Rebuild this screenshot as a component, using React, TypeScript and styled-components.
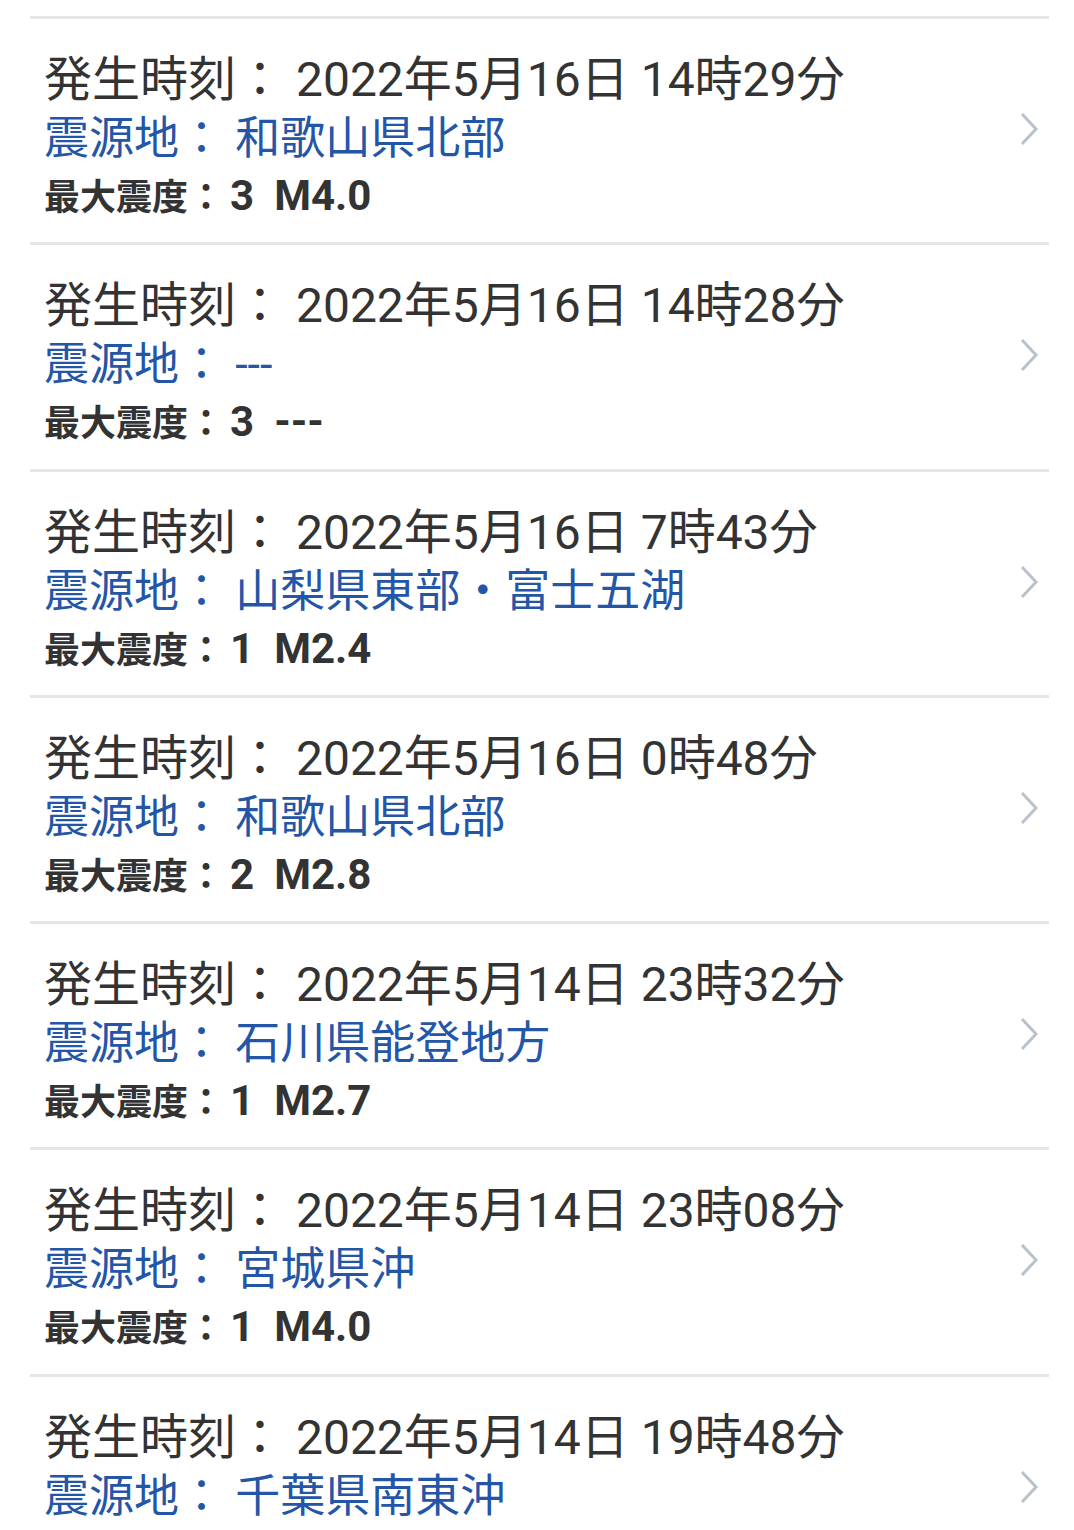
import React from "react";
import styled, { createGlobalStyle } from "styled-components";

const Global = createGlobalStyle`
  html, body { margin: 0; padding: 0; background: #ffffff; }
  body { font-family: Roboto, "Noto Sans CJK JP", sans-serif; }
`;

const List = styled.div`
  padding-top: 16px;
  background: #ffffff;
`;

const Item = styled.div`
  display: flex;
  align-items: center;
  margin: 0 25px 0 30px;
  border-top: 3px solid #e6e6e6;
  padding: 31px 10px 22.3px 14px;
`;

const Body = styled.div`
  flex: 1;
  display: flex;
  flex-direction: column;
`;

const TimeLine = styled.div`
  font-size: 48px;
  line-height: 60px;
  height: 60px;
  color: #333333;
  white-space: nowrap;
`;

const PlaceLine = styled.div`
  font-size: 45px;
  line-height: 58px;
  height: 58px;
  color: #2456a8;
  white-space: nowrap;
`;

const InfoLine = styled.div`
  font-size: 36px;
  line-height: 60px;
  height: 52px;
  font-weight: 700;
  color: #333333;
  white-space: nowrap;
`;

const Num = styled.span<{ $gap: number }>`
  font-size: 42px;
  line-height: 40px;
  margin-left: ${(p) => p.$gap}px;
`;

const Chevron = styled.svg`
  flex: none;
  width: 20px;
  height: 32px;
  margin-bottom: 12px;
`;

type Quake = { time: string; place: string; shindo: string; mag: string };

const data: Quake[] = [
  { time: "2022年5月16日 14時29分", place: "和歌山県北部", shindo: "3", mag: "M4.0" },
  { time: "2022年5月16日 14時28分", place: "---", shindo: "3", mag: "---" },
  { time: "2022年5月16日 7時43分", place: "山梨県東部・富士五湖", shindo: "1", mag: "M2.4" },
  { time: "2022年5月16日 0時48分", place: "和歌山県北部", shindo: "2", mag: "M2.8" },
  { time: "2022年5月14日 23時32分", place: "石川県能登地方", shindo: "1", mag: "M2.7" },
  { time: "2022年5月14日 23時08分", place: "宮城県沖", shindo: "1", mag: "M4.0" },
  { time: "2022年5月14日 19時48分", place: "千葉県南東沖", shindo: "1", mag: "M3.1" },
];

export default function App() {
  return (
    <>
      <Global />
      <List>
        {data.map((q, i) => (
          <Item key={i}>
            <Body>
              <TimeLine>発生時刻： {q.time}</TimeLine>
              <PlaceLine>震源地： {q.place}</PlaceLine>
              <InfoLine>
                最大震度：
                <Num $gap={6}>{q.shindo}</Num>
                <Num $gap={20}>{q.mag}</Num>
              </InfoLine>
            </Body>
            <Chevron viewBox="0 0 20 32">
              <polyline points="3,1 17,16 3,31" fill="none" stroke="#b8c2cc" strokeWidth="3" />
            </Chevron>
          </Item>
        ))}
      </List>
    </>
  );
}
